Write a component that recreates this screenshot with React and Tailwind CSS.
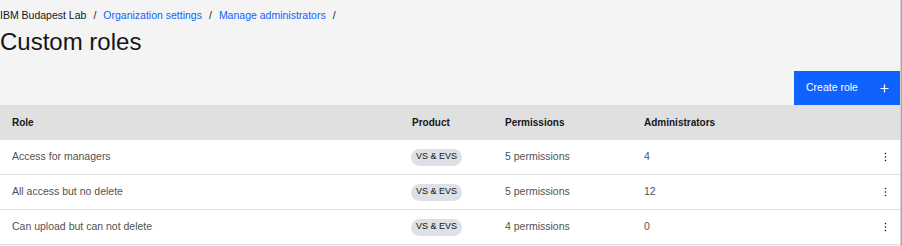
import React from "react";

const roles = [
  { name: "Access for managers", product: "VS & EVS", permissions: "5 permissions", admins: "4" },
  { name: "All access but no delete", product: "VS & EVS", permissions: "5 permissions", admins: "12" },
  { name: "Can upload but can not delete", product: "VS & EVS", permissions: "4 permissions", admins: "0" },
];

function Kebab() {
  return (
    <svg width="3" height="10" viewBox="0 0 3 10" className="fill-[#161616]">
      <circle cx="1.5" cy="1.5" r="0.8" />
      <circle cx="1.5" cy="5" r="0.8" />
      <circle cx="1.5" cy="8.5" r="0.8" />
    </svg>
  );
}

export default function App() {
  return (
    <div className="flex min-h-[246px] w-[902px] bg-[#f4f4f4] font-['Liberation_Sans',Arial,sans-serif] text-[#161616]">
      <div className="w-[900px]">
        {/* breadcrumb */}
        <div className="flex h-7 items-center gap-[7px] pt-1 text-[10.5px]">
          <span>IBM Budapest Lab</span>
          <span>/</span>
          <span className="text-[#0f62fe]">Organization settings</span>
          <span>/</span>
          <span className="text-[#0f62fe]">Manage administrators</span>
          <span>/</span>
        </div>

        <h1 className="h-7 text-[24px] leading-[28px]">Custom roles</h1>

        <div className="mt-[15px] flex justify-end">
          <button className="flex h-[34px] w-[106px] items-center justify-between bg-[#0f62fe] pl-3 pr-[11px] text-[10.5px] text-white">
            <span>Create role</span>
            <svg width="9" height="9" viewBox="0 0 9 9" className="stroke-white">
              <path d="M4.5 0.5v8M0.5 4.5h8" strokeWidth="1.2" />
            </svg>
          </button>
        </div>

        {/* table */}
        <div>
          <div className="grid h-[35px] grid-cols-[400px_93px_139px_1fr_30px] items-center bg-[#e0e0e0] text-[10px] font-bold">
            <div className="pl-3">Role</div>
            <div className="pl-3">Product</div>
            <div className="pl-3">Permissions</div>
            <div className="pl-3">Administrators</div>
            <div />
          </div>
          {roles.map((r) => (
            <div
              key={r.name}
              className="grid h-[35px] grid-cols-[400px_93px_139px_1fr_30px] items-center border-b border-[#e0e0e0] bg-white text-[10.5px] text-[#525252]"
            >
              <div className="pl-3">{r.name}</div>
              <div className="pl-[11px]">
                <span className="inline-flex h-[17px] items-center rounded-full bg-[#dde1e6] px-[5px] text-[9px] text-[#121619]">
                  {r.product}
                </span>
              </div>
              <div className="pl-3">{r.permissions}</div>
              <div className="pl-3">{r.admins}</div>
              <div className="flex justify-center">
                <Kebab />
              </div>
            </div>
          ))}
        </div>
      </div>
      <div className="w-[2px] border-l border-[#d0d0d0] bg-[#a8a8a8]" />
    </div>
  );
}
